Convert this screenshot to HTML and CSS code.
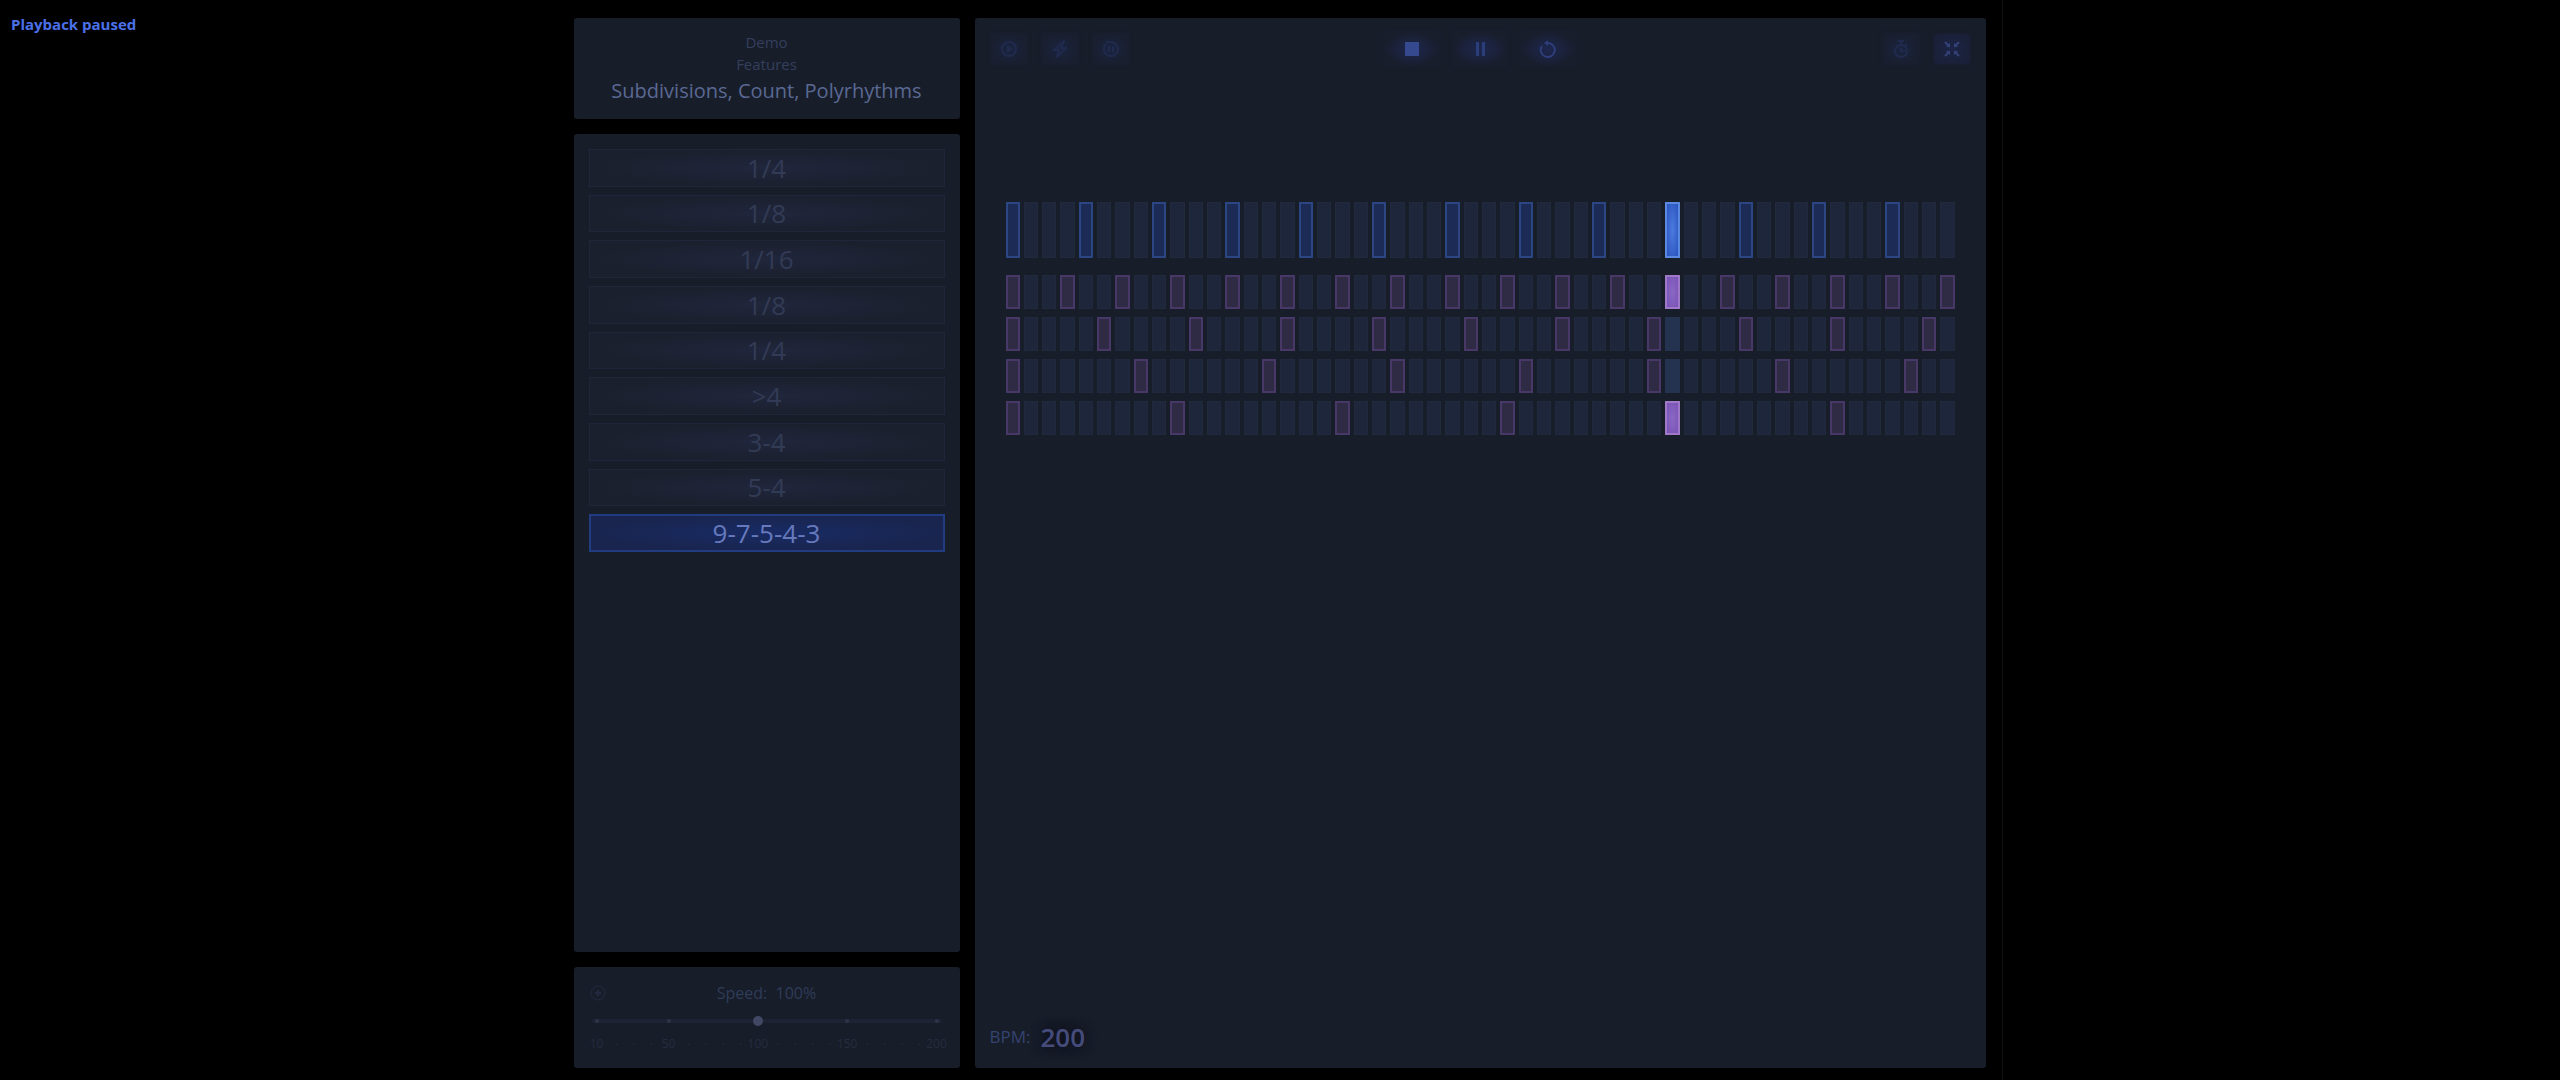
FILE: index.html
```html
<!DOCTYPE html>
<html lang="en">
<head>
<meta charset="utf-8">
<title>Rhythm trainer</title>
<link rel="stylesheet" href="styles.css">
</head>
<body>
<p class="status" role="status">Playback paused</p>
<div class="app">
  <aside class="sidebar">
    <header class="panel heading">
      <p class="crumb">Demo</p>
      <p class="crumb">Features</p>
      <h1 class="title">Subdivisions, Count, Polyrhythms</h1>
    </header>
    <nav class="panel patterns">
      <div class="pattern-list">
        <button class="pattern" type="button">1/4</button>
        <button class="pattern" type="button">1/8</button>
        <button class="pattern" type="button">1/16</button>
        <button class="pattern" type="button">1/8</button>
        <button class="pattern" type="button">1/4</button>
        <button class="pattern" type="button">&gt;4</button>
        <button class="pattern" type="button">3-4</button>
        <button class="pattern" type="button">5-4</button>
        <button class="pattern selected" type="button">9-7-5-4-3</button>
      </div>
    </nav>
    <section class="panel speed">
      <div class="speed-head">
        <button class="speed-add" type="button" aria-label="Speed options">
          <svg width="16" height="16" viewBox="0 0 16 16" fill="none" stroke="currentColor"><circle cx="8" cy="8" r="7"/><path d="M8 5v6M5 8h6" stroke-width="2"/></svg>
        </button>
        <label class="speed-label" for="speed">Speed: &nbsp;100%</label>
      </div>
      <input class="speed-range" id="speed" type="range" min="10" max="200" step="10" value="100">
      <ol class="scale">
        <li class="major"><span>10</span></li><li></li><li></li><li></li>
        <li class="major"><span>50</span></li><li></li><li></li><li></li><li></li>
        <li class="major"><span>100</span></li><li></li><li></li><li></li><li></li>
        <li class="major"><span>150</span></li><li></li><li></li><li></li><li></li>
        <li class="major"><span>200</span></li>
      </ol>
    </section>
  </aside>
  <main class="panel stage">
    <div class="toolbar">
      <div class="tools">
        <button class="tool faint" type="button" aria-label="Auto play">
          <svg width="18" height="18" viewBox="0 0 18 18" fill="none" stroke="currentColor" stroke-width="2"><circle cx="9" cy="9" r="7"/><path d="M7 5l6 4-6 4z" fill="currentColor" stroke="none"/></svg>
        </button>
        <button class="tool faint" type="button" aria-label="Flash">
          <svg width="18" height="18" viewBox="0 0 18 18" fill="none" stroke="currentColor" stroke-width="2" stroke-linejoin="round"><path d="M13 1L3 10h5l-2 7 9-9h-5z"/></svg>
        </button>
        <button class="tool faint" type="button" aria-label="Timed pause">
          <svg width="18" height="18" viewBox="0 0 18 18" fill="none" stroke="currentColor" stroke-width="2"><path d="M4 4A7 7 0 1 0 9 2H4M7 6v6M11 6v6"/></svg>
        </button>
      </div>
      <div class="transport">
        <button class="key" type="button" aria-label="Stop">
          <svg width="16" height="16" viewBox="0 0 16 16" fill="#354a8e"><path d="M1 1h14v14H1z"/></svg>
        </button>
        <button class="key" type="button" aria-label="Pause">
          <svg width="16" height="16" viewBox="0 0 16 16" fill="#2c3d7c"><path d="M4 1h3v14H4zM10 1h3v14h-3z"/></svg>
        </button>
        <button class="key" type="button" aria-label="Restart">
          <svg width="18" height="18" viewBox="0 0 18 18" fill="none" stroke="#2c3d79" stroke-width="2"><path d="M3 6A7 7 0 1 0 9 3H7"/><path d="M9 0L5 3l4 3z" fill="#2c3d79" stroke="none"/></svg>
        </button>
      </div>
      <div class="tools end">
        <button class="tool faint" type="button" aria-label="Timer">
          <svg width="18" height="20" viewBox="0 0 18 20" fill="none" stroke="currentColor" stroke-width="2"><circle cx="9" cy="12" r="6"/><path d="M9 6V2M6 2h6M13 7l2-2M9 9v3h4"/></svg>
        </button>
        <button class="tool" type="button" aria-label="Exit full screen">
          <svg width="16" height="16" viewBox="0 0 16 16" fill="none" stroke="currentColor" stroke-width="2"><path d="M1 1l4 4M15 1l-4 4M1 15l4-4M15 15l-4-4"/><path d="M6 2v4H2zM10 2v4h4zM6 14v-4H2zM10 14v-4h4z" fill="currentColor" stroke="none"/></svg>
        </button>
      </div>
    </div>
    <div class="beats" id="beats"></div>
    <p class="bpm">BPM: <strong class="bpm-value">200</strong></p>
  </main>
</div>
<script src="beats.js"></script>
</body>
</html>
```

FILE: styles.css
```css
* {
  box-sizing: border-box;
}

body {
  margin: 0;
  background: #000;
  color: #333e5e;
  font-family: "Open Sans", "Noto Sans", sans-serif;
}

p, h1, ol {
  margin: 0;
  padding: 0;
}

button {
  padding: 0;
  font: inherit;
  cursor: pointer;
}

.status {
  position: absolute;
  top: 14px;
  left: 11px;
  color: #4b70e8;
  font-size: 15px;
  font-weight: 700;
  line-height: 20px;
}

.app {
  display: grid;
  grid-template-columns: 386px minmax(0, 1fr);
  gap: 15px;
  max-width: 1445px;
  min-height: 100vh;
  margin: 0 auto;
  padding: 18px 16px 12px;
  border-right: 1px solid #101012;
}

.panel {
  border-radius: 3px;
  background: #181d2a;
}

.sidebar {
  display: grid;
  grid-template-rows: auto 1fr auto;
  gap: 15px;
}

.heading {
  padding: 13px 8px 12px;
  text-align: center;
}

.crumb {
  color: #333f5d;
  font-size: 15px;
  line-height: 22px;
}

.title {
  color: #5a6993;
  font-size: 20px;
  font-weight: 400;
  line-height: 32px;
  white-space: nowrap;
}

.patterns {
  padding: 15px;
}

.pattern-list {
  display: grid;
  grid-auto-rows: 1fr;
  gap: 8px;
  height: 403px;
}

.pattern {
  border: 1px solid #20263a;
  background: radial-gradient(ellipse closest-side, #20263c, #1b202e);
  color: #323b55;
  font-size: 26px;
  line-height: 32px;
}

.selected {
  border: 2px solid #213c80;
  background: radial-gradient(ellipse closest-side, #182b65, #19254f);
  color: #6779bd;
}

.speed {
  padding: 14px 16px 17px;
}

.speed-head {
  display: grid;
  grid-template-columns: 16px 1fr 16px;
  align-items: center;
  height: 24px;
}

.speed-add {
  display: flex;
  border: 0;
  background: none;
  color: #222a40;
}

.speed-label {
  color: #2f3c58;
  font-size: 16px;
  line-height: 24px;
  text-align: center;
}

.speed-range {
  position: relative;
  z-index: 1;
  display: block;
  width: calc(100% - 4px);
  height: 12px;
  margin: 10px 2px;
  background: none;
  appearance: none;
}

.speed-range::-webkit-slider-runnable-track {
  height: 4px;
  border-radius: 2px;
  background: #23293b80;
}

.speed-range::-webkit-slider-thumb {
  width: 10px;
  height: 10px;
  margin-top: -3px;
  border-radius: 50%;
  background: #404864;
  appearance: none;
}

.scale {
  display: grid;
  grid-template-columns: repeat(19, 1fr) 0;
  margin: 0 7px;
  list-style: none;
}

.scale li {
  position: relative;
  height: 14px;
  color: #252c3f;
  font-size: 12px;
  line-height: 14px;
}

.scale li::before {
  content: "";
  position: absolute;
  top: 7px;
  left: -1px;
  width: 2px;
  height: 1px;
  background: #22293a;
}

.scale .major::before {
  top: -18px;
  left: -2px;
  width: 4px;
  height: 4px;
  border-radius: 50%;
  background: #363f56;
}

.scale span {
  display: block;
  width: 40px;
  margin-left: -20px;
  text-align: center;
}

.stage {
  display: grid;
  grid-template-rows: auto 1fr auto;
}

.toolbar {
  display: grid;
  grid-template-columns: 1fr auto 1fr;
  align-items: center;
  padding: 14px 16px;
}

.tools {
  display: flex;
  gap: 15px;
}

.end {
  justify-content: flex-end;
}

.transport {
  display: flex;
  gap: 14px;
}

.tool,
.key {
  display: flex;
  align-items: center;
  justify-content: center;
  width: 36px;
  height: 30px;
  border: 0;
  border-radius: 4px;
  background: radial-gradient(ellipse closest-side, #1c2549, #1a2037);
  color: #35427a;
  box-shadow: 0 0 4px #1a2035;
}

.key {
  width: 54px;
  height: 34px;
  background: radial-gradient(ellipse closest-side, #1d2750, #191e2d);
}

.faint {
  background: radial-gradient(ellipse closest-side, #1a2441, #191f2f);
  color: #202a4d;
}

.beats {
  display: grid;
  align-content: start;
  gap: 8px;
  padding: 122px 31px 24px;
}

.row {
  display: grid;
  grid-template-columns: repeat(52, minmax(0, 1fr));
  gap: 4px;
  height: 34px;
}

.main {
  height: 56px;
  margin-bottom: 9px;
}

.cell {
  border: 1px solid #212a3d;
  background: #1d263a;
}

.current {
  border-color: #233350;
  background: #233350;
}

.accent {
  border: 2px solid #483868;
  background: #302b45;
}

.main .accent {
  border-color: #2c4683;
  background: #1c2b55;
}

.accent.current {
  border-color: #a078c8;
  background: radial-gradient(ellipse, #8c68c4, #7853b6);
}

.main .accent.current {
  border-color: #5c89e0;
  background: radial-gradient(ellipse, #4d7be0, #2853bd);
}

.bpm {
  display: flex;
  align-items: center;
  gap: 10px;
  padding: 0 15px 11px;
  color: #34436f;
  font-size: 17px;
  line-height: 40px;
}

.bpm-value {
  color: #454c7c;
  font-size: 26px;
  font-weight: 600;
  text-shadow: 0 0 12px #10121d, 0 0 8px #10121d;
}
```

FILE: beats.js
```js
// Each row accents every nth of the 52 steps; playback is stopped on step 36.
const STEPS = 52;
const CURRENT = 36;
const board = document.getElementById("beats");

[4, 3, 5, 7, 9].forEach((interval, index) => {
  const row = document.createElement("div");
  row.className = index === 0 ? "row main" : "row";
  for (let step = 0; step < STEPS; step++) {
    const cell = document.createElement("span");
    cell.className = "cell";
    if (step % interval === 0) cell.classList.add("accent");
    if (step === CURRENT) cell.classList.add("current");
    row.append(cell);
  }
  board.append(row);
});
```
